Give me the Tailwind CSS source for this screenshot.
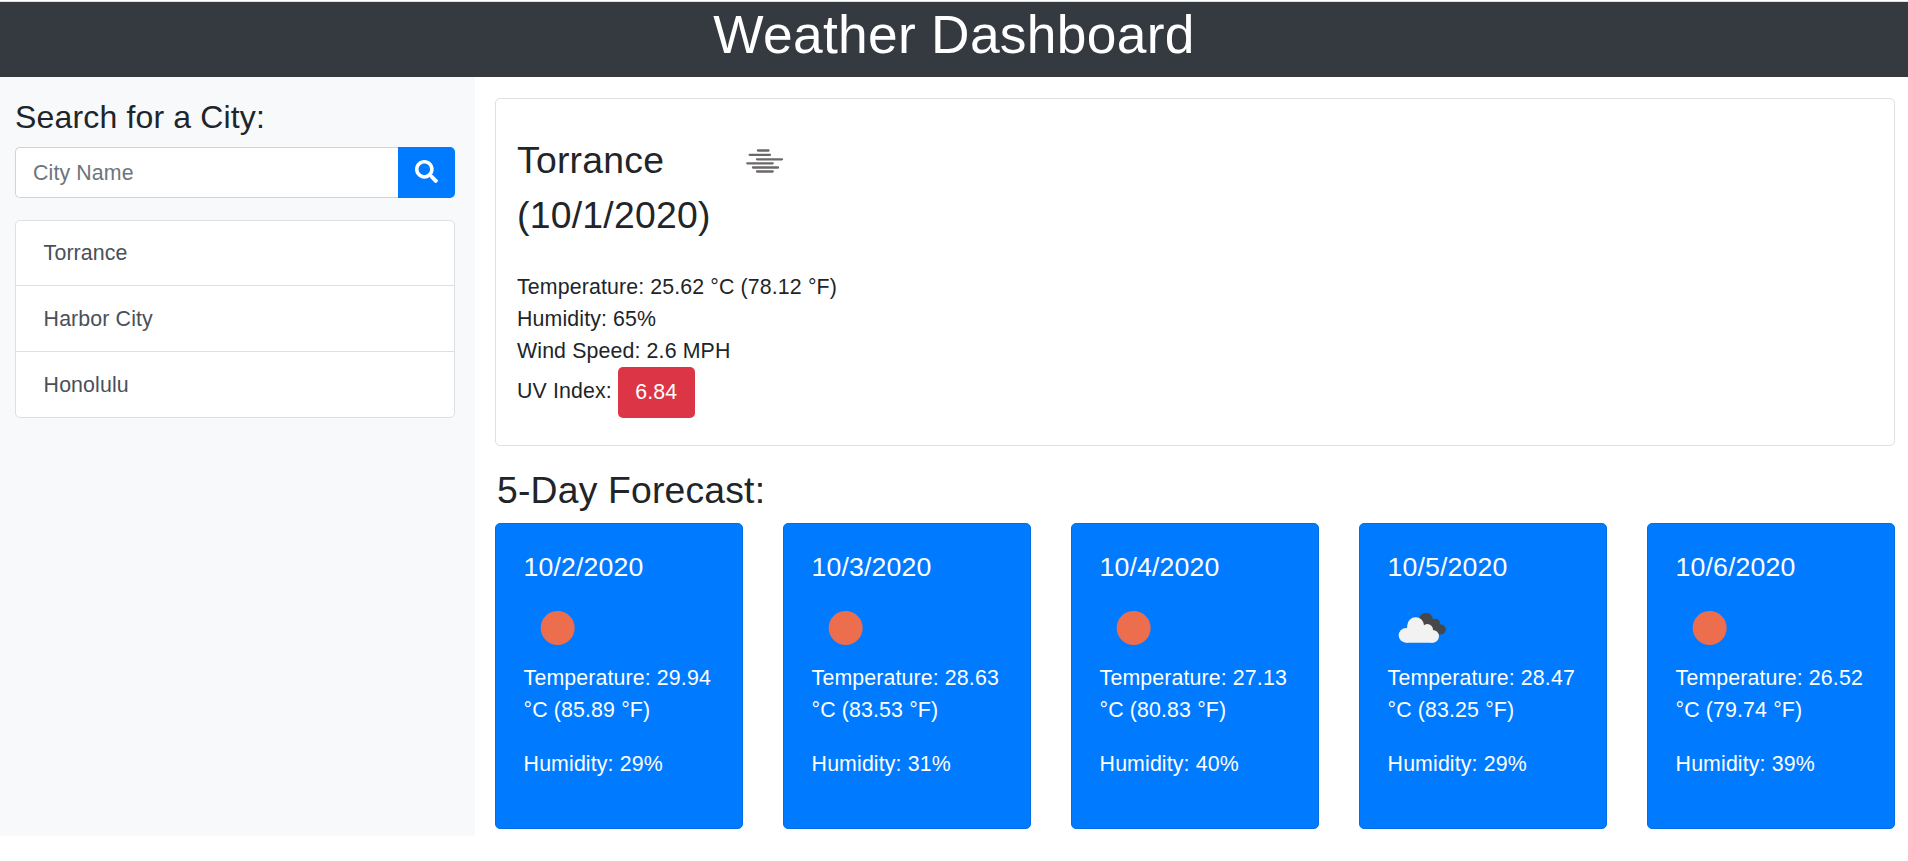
<!DOCTYPE html>
<html lang="en">
<head>
<meta charset="utf-8">
<title>Weather Dashboard</title>
<script src="https://cdn.jsdelivr.net/npm/@tailwindcss/browser@4"></script>
</head>
<body class="bg-white text-[#212529] text-[21.33px] leading-8 tracking-[0.13px] font-['Liberation_Sans',Arial,sans-serif] overflow-hidden">
<svg class="hidden">
  <symbol id="sun" viewBox="0 0 200 200"><circle cx="101" cy="99" r="51" fill="#ec6e4c"/></symbol>
  <symbol id="clouds" viewBox="-6 -14 200 200">
    <g fill="#48484a"><circle cx="108" cy="60" r="21"/><circle cx="136" cy="71" r="14"/><circle cx="152" cy="89" r="15.5"/><path d="M100 60L136 62L160 90L150 104L120 100Z"/></g>
    <g fill="#f2f2f2"><circle cx="48" cy="107" r="22"/><circle cx="77" cy="78" r="25.5"/><circle cx="112" cy="90" r="17"/><circle cx="128" cy="110" r="19"/><path d="M52 80H100L128 100V129H48Z"/></g>
  </symbol>
</svg>
<header class="mt-px h-[76px] border-t border-[#dee2e6] bg-[#343a40] text-center text-white">
  <h1 class="pt-px text-[53.33px] leading-[64px] tracking-[0.3px]">Weather Dashboard</h1>
</header>
<div class="flex">
  <aside class="w-[475px] h-[759px] bg-[#f8f9fa] pt-[21px] pl-[15px] pr-5">
    <h2 class="text-[32px] leading-[39px] mb-2.5 tracking-[0.16px]">Search for a City:</h2>
    <form class="flex h-[51px] mb-[22px]">
      <input type="text" placeholder="City Name" class="min-w-0 flex-1 rounded-l-[5px] border border-r-0 border-[#ced4da] bg-white pl-[17px] pr-4 placeholder:text-[#6c757d]">
      <button type="button" aria-label="Search" class="w-[57px] rounded-r-[5px] bg-[#007bff] flex items-center justify-center">
        <svg class="w-[23px] h-[23px] -mt-[2px]" viewBox="0 0 512 512" fill="#fff"><path d="M505 442.7L405.3 343c-4.5-4.5-10.6-7-17-7H372c27.6-35.3 44-79.7 44-128C416 93.1 322.9 0 208 0S0 93.1 0 208s93.1 208 208 208c48.3 0 92.7-16.4 128-44v16.3c0 6.4 2.5 12.5 7 17l99.700 99.700c9.400 9.400 24.600 9.400 33.900 0l28.300-28.300c9.400-9.400 9.400-24.600.1-34zM208 336c-70.700 0-128-57.200-128-128 0-70.700 57.200-128 128-128 70.700 0 128 57.200 128 128 0 70.700-57.200 128-128 128z"/></svg>
      </button>
    </form>
    <ul class="rounded-[5px] border border-[#dfdfdf] bg-white text-[#495057] divide-y divide-[#dfdfdf]">
      <li class="h-[65px] px-[27.6px] py-4">Torrance</li>
      <li class="h-[66px] px-[27.6px] py-[17px]">Harbor City</li>
      <li class="h-[65px] px-[27.6px] py-[17px]">Honolulu</li>
    </ul>
  </aside>
  <main class="ml-5 w-[1400px] pt-[21px]">
    <section class="h-[348px] rounded-[5px] border border-[#dfdfdf] pl-[21px] pt-[34px]">
      <div class="flex h-[110px] mb-7">
        <h2 class="w-[226px] text-[37.33px] leading-[55px] tracking-[0.25px]">Torrance<br>(10/1/2020)</h2>
        <svg class="w-[44px] h-[40px] mt-[7px]" viewBox="743 140 44 40" stroke="#6b6869" stroke-width="2.3" stroke-linecap="round"><path d="M758 150.500H768.500M749.700 154.800H770M757 159.300H782M747.300 163.300H772.700M753 167.500H778M757 171.500H772.700"/></svg>
      </div>
      <p>Temperature: 25.62 °C (78.12 °F)</p>
      <p>Humidity: 65%</p>
      <p>Wind Speed: 2.6 MPH</p>
      <p class="flex gap-[6px]"><span class="pt-2">UV Index:</span><span class="h-[51px] w-[77px] rounded-[5px] bg-[#dc3545] pt-[9px] text-center text-white">6.84</span></p>
    </section>
    <h2 class="mt-[22px] mb-2.5 pl-0.5 text-[37.33px] leading-[45px] tracking-[0.18px]">5-Day Forecast:</h2>
    <div class="grid grid-cols-5 gap-10 text-white">
      <article class="h-[306px] rounded-[5px] border border-[#006fe5] bg-[#007bff] px-[27.6px] pt-[27px]">
        <h3 class="text-[26.67px] leading-8 mb-3">10/2/2020</h3>
        <svg class="block w-[66.67px] h-[66.67px]"><use href="#sun"/></svg>
        <p class="mb-[22px]">Temperature: 29.94 °C (85.89 °F)</p>
        <p>Humidity: 29%</p>
      </article>
      <article class="h-[306px] rounded-[5px] border border-[#006fe5] bg-[#007bff] px-[27.6px] pt-[27px]">
        <h3 class="text-[26.67px] leading-8 mb-3">10/3/2020</h3>
        <svg class="block w-[66.67px] h-[66.67px]"><use href="#sun"/></svg>
        <p class="mb-[22px]">Temperature: 28.63 °C (83.53 °F)</p>
        <p>Humidity: 31%</p>
      </article>
      <article class="h-[306px] rounded-[5px] border border-[#006fe5] bg-[#007bff] px-[27.6px] pt-[27px]">
        <h3 class="text-[26.67px] leading-8 mb-3">10/4/2020</h3>
        <svg class="block w-[66.67px] h-[66.67px]"><use href="#sun"/></svg>
        <p class="mb-[22px]">Temperature: 27.13 °C (80.83 °F)</p>
        <p>Humidity: 40%</p>
      </article>
      <article class="h-[306px] rounded-[5px] border border-[#006fe5] bg-[#007bff] px-[27.6px] pt-[27px]">
        <h3 class="text-[26.67px] leading-8 mb-3">10/5/2020</h3>
        <svg class="block w-[66.67px] h-[66.67px]"><use href="#clouds"/></svg>
        <p class="mb-[22px]">Temperature: 28.47 °C (83.25 °F)</p>
        <p>Humidity: 29%</p>
      </article>
      <article class="h-[306px] rounded-[5px] border border-[#006fe5] bg-[#007bff] px-[27.6px] pt-[27px]">
        <h3 class="text-[26.67px] leading-8 mb-3">10/6/2020</h3>
        <svg class="block w-[66.67px] h-[66.67px]"><use href="#sun"/></svg>
        <p class="mb-[22px]">Temperature: 26.52 °C (79.74 °F)</p>
        <p>Humidity: 39%</p>
      </article>
    </div>
  </main>
</div>
</body>
</html>
